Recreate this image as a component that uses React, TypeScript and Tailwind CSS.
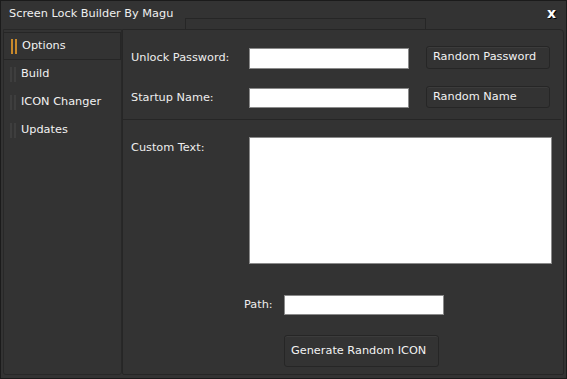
import { useState } from "react";

const font = { fontFamily: '"DejaVu Sans", Verdana, sans-serif' };

const navItems = ["Options", "Build", "ICON Changer", "Updates"];

function DarkButton({ label, className }: { label: string; className: string }) {
  return (
    <button
      className={`flex items-center rounded-[3px] border border-[#262626] bg-[#333333] text-[11.3px] text-[#f2f2f2] shadow-[inset_0_1px_0_#3c3c3c] ${className}`}
    >
      {label}
    </button>
  );
}

export default function App() {
  const [active, setActive] = useState(0);

  return (
    <div
      className="w-[567px] h-[379px] bg-[#333333] border border-[#1b1b1b] flex flex-col overflow-hidden select-none"
      style={font}
    >
      {/* title bar */}
      <div className="h-[28px] flex items-start relative shrink-0">
        <span className="pl-[8px] pt-[6px] text-[11.3px] text-[#f0f0f0] leading-[14px]">
          Screen Lock Builder By Magu
        </span>
        <div className="absolute left-[184px] top-[17px] w-[241px] h-[11px] border border-b-0 border-[#262626]" />
        <span className="ml-auto mr-[10px] mt-[4px] text-[14px] font-bold text-white leading-[16px] [text-shadow:1px_1px_0_#000]">
          x
        </span>
      </div>

      {/* body */}
      <div className="flex-1 flex pl-[2px] pr-[2px] pb-[3px] min-h-0">
        {/* sidebar */}
        <div className="w-[119px] border border-[#282828] rounded-b-[3px] flex flex-col pt-[3px] shrink-0">
          {navItems.map((item, i) => (
            <div
              key={item}
              onClick={() => setActive(i)}
              className={`h-[28px] flex items-center gap-[5px] pl-[6px] cursor-pointer ${
                i === active ? "border border-[#262626] -ml-[1px] -mt-[1px] pl-[7px]" : ""
              }`}
            >
              <div className="flex gap-[2px] h-[15px]">
                <div className={`w-[2px] h-full ${i === active ? "bg-[#c8892b]" : "bg-[#3e3e3e]"}`} />
                <div className={`w-[2px] h-full ${i === active ? "bg-[#c8892b]" : "bg-[#3e3e3e]"}`} />
              </div>
              <span className="text-[11.3px] text-[#f2f2f2]">{item}</span>
            </div>
          ))}
        </div>

        {/* main panel */}
        <div className="flex-1 border border-[#262626] rounded-tr-[4px] rounded-b-[2px] flex flex-col">
          <div className="pl-[8px] pr-[11px] pt-[17px] flex flex-col gap-[18px] h-[89px]">
            <div className="flex items-center h-[22px]">
              <span className="w-[118px] text-[11.3px] text-[#eeeeee]">Unlock Password:</span>
              <input className="w-[160px] h-[21px] bg-white border border-[#8a8a8a] outline-none" />
              <DarkButton label="Random Password" className="ml-[17px] w-[124px] h-[23px] pl-[6px] -mt-[2px]" />
            </div>
            <div className="flex items-center h-[22px]">
              <span className="w-[118px] text-[11.3px] text-[#eeeeee]">Startup Name:</span>
              <input className="w-[160px] h-[20px] bg-white border border-[#8a8a8a] outline-none" />
              <DarkButton label="Random Name" className="ml-[17px] w-[124px] h-[22px] pl-[6px] -mt-[2px]" />
            </div>
          </div>
          <div className="h-[1px] bg-[#262626] mr-[2px]" />
          <div className="flex pl-[8px] pt-[17px]">
            <span className="w-[118px] text-[11.3px] text-[#eeeeee] pt-[3px]">Custom Text:</span>
            <textarea className="w-[303px] h-[127px] bg-white border border-[#8a8a8a] outline-none resize-none" />
          </div>
          <div className="flex items-center pl-[121px] mt-[31px]">
            <span className="w-[40px] text-[11.3px] text-[#eeeeee]">Path:</span>
            <input className="w-[160px] h-[20px] bg-white border border-[#8a8a8a] outline-none" />
          </div>
          <div className="pl-[161px] mt-[20px]">
            <DarkButton label="Generate Random ICON" className="w-[155px] h-[32px] pl-[6px]" />
          </div>
        </div>
      </div>
    </div>
  );
}
